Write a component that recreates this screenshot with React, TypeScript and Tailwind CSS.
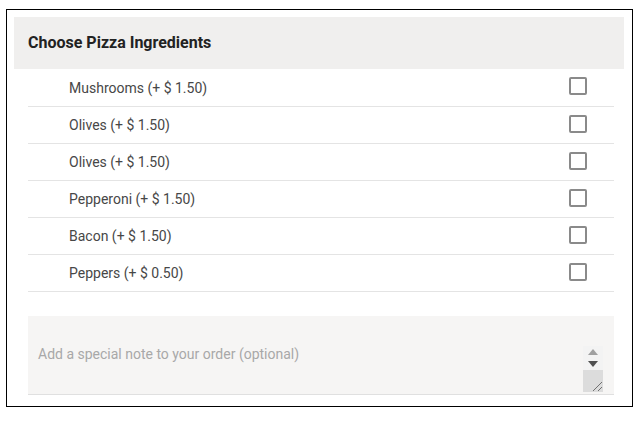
import React from "react";

const items = [
  "Mushrooms (+ $ 1.50)",
  "Olives (+ $ 1.50)",
  "Olives (+ $ 1.50)",
  "Pepperoni (+ $ 1.50)",
  "Bacon (+ $ 1.50)",
  "Peppers (+ $ 0.50)",
];

export default function App() {
  return (
    <div className="w-[639px] h-[421px] bg-white pt-[9px] pl-[6px]" style={{ fontFamily: "Roboto, 'Liberation Sans', sans-serif" }}>
      <div className="w-[627px] h-[398px] border border-black pt-[7px] pl-[7px] pr-[8px]">
        <div className="h-[52px] bg-[#f0efee] flex items-center pl-[14px]">
          <span className="text-[16px] font-bold text-[#222] pb-[1px]">Choose Pizza Ingredients</span>
        </div>
        <div className="ml-[14px] mr-[10px]">
          {items.map((it, i) => (
            <div key={i} className={`flex items-center justify-between border-b border-[#e4e4e4] ${i === 0 ? "h-[38px]" : "h-[37px]"}`}>
              <span className="pl-[41px] text-[14px] text-[#474747] pt-[1px]">{it}</span>
              <span className="mr-[27px] w-[18px] h-[18px] border-2 border-[#8a8a8a] rounded-[2px] bg-white mb-[3px]" />
            </div>
          ))}
          <div className="mt-[24px] h-[79px] bg-[#f6f5f4] border-b border-[#e0e0e0] relative pl-[10px] pt-[26px]">
            <span className="text-[14px] text-[#a8a8a8]">Add a special note to your order (optional)</span>
            <div className="absolute right-[11px] top-[30px] w-[20px] flex flex-col items-center">
              <div className="w-[20px] h-[12px] bg-[#f3f3f3] flex items-center justify-center">
                <svg width="10" height="6" viewBox="0 0 10 6"><path d="M5 0 L10 6 L0 6 Z" fill="#a0a0a0" /></svg>
              </div>
              <div className="w-[20px] h-[12px] bg-[#f3f3f3] flex items-center justify-center">
                <svg width="10" height="6" viewBox="0 0 10 6"><path d="M0 0 L10 0 L5 6 Z" fill="#505050" /></svg>
              </div>
              <div className="w-[20px] h-[22px] bg-[#dcdcdc] relative">
                <svg className="absolute right-0 bottom-0" width="14" height="14" viewBox="0 0 14 14">
                  <path d="M13 4 L4 13 M13 9 L9 13" stroke="#707070" strokeWidth="1" />
                </svg>
              </div>
            </div>
          </div>
        </div>
      </div>
    </div>
  );
}
